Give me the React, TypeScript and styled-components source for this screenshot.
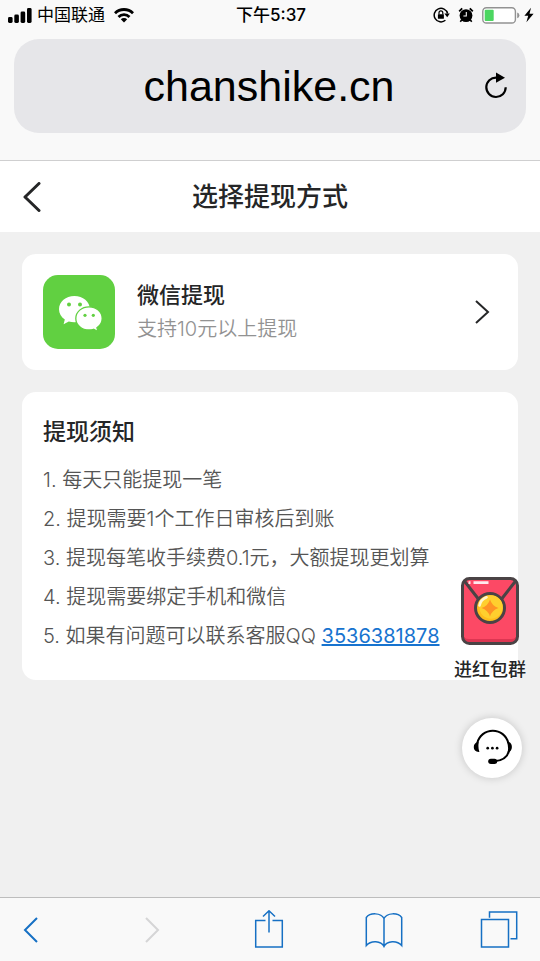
import React from "react";
import styled, { createGlobalStyle } from "styled-components";

const GlobalStyle = createGlobalStyle`
  *, *::before, *::after { box-sizing: border-box; }
  body {
    margin: 0;
    background: #f0f0f0;
    color: #252627;
    font-family: Inter, "Noto Sans CJK SC", sans-serif;
  }
  h1, h2, p, ol { margin: 0; padding: 0; }
  button { border: 0; padding: 0; background: none; font: inherit; color: inherit; cursor: pointer; }
  svg { display: block; flex: none; }
`;

const Screen = styled.div`
  display: flex;
  flex-direction: column;
  min-height: 100vh;
  position: relative;
`;

const BrowserTop = styled.header`
  background: #f9f9f9;
  border-bottom: 1px solid #cfcfd0;
  padding-bottom: 27px;
`;

const StatusBar = styled.div`
  display: grid;
  grid-template-columns: 1fr auto 1fr;
  align-items: center;
  height: 30px;
  padding: 0 6px 0 8px;
  color: #000;
  font-size: 17px;
  line-height: 28px;
`;

const StatusGroup = styled.div<{ $align?: "start" | "end" }>`
  display: flex;
  align-items: center;
  justify-content: ${(p) => p.$align ?? "start"};
  gap: ${(p) => (p.$align === "end" ? 8 : 5)}px;
`;

const Carrier = styled.span`
  margin-right: 4px;
`;

const Clock = styled.time`
  font-weight: 500;
`;

const BatteryGroup = styled.span`
  display: flex;
  align-items: center;
  gap: 4px;
`;

const AddressBar = styled.form`
  display: flex;
  align-items: center;
  height: 94px;
  margin: 9px 14px 0;
  padding: 0 8px 0 50px;
  border-radius: 25px;
  background: #e6e6e9;
`;

const AddressInput = styled.input`
  flex: 1;
  min-width: 0;
  border: 0;
  padding: 0;
  outline: 0;
  background: none;
  color: #000;
  text-align: center;
  font: 400 43px/60px "Liberation Sans", sans-serif;
`;

const PageHeader = styled.header`
  display: grid;
  grid-template-columns: 48px 1fr 48px;
  align-items: center;
  height: 71px;
  padding: 0 10px;
  background: #fff;
`;

const PageTitle = styled.h1`
  text-align: center;
  font-size: 26px;
  line-height: 40px;
  font-weight: 500;
`;

const IconButton = styled.button`
  display: flex;
  align-items: center;
  justify-content: center;
  width: 44px;
  height: 44px;
`;

const Content = styled.main`
  flex: 1;
  display: flex;
  flex-direction: column;
  gap: 22px;
  padding: 22px;
`;

const MethodCard = styled.button`
  display: flex;
  align-items: center;
  gap: 22px;
  padding: 21px 28px 21px 21px;
  border-radius: 14px;
  background: #fff;
  text-align: left;
`;

const MethodText = styled.span`
  flex: 1;
  display: flex;
  flex-direction: column;
  line-height: 34px;
`;

const MethodName = styled.span`
  font-size: 22px;
  font-weight: 500;
`;

const MethodHint = styled.span`
  font-size: 20px;
  font-weight: 350;
  color: #929292;
`;

const NoticeCard = styled.section`
  padding: 22px 21px 24px;
  border-radius: 14px;
  background: #fff;
`;

const NoticeTitle = styled.h2`
  margin-bottom: 10px;
  font-size: 23px;
  line-height: 37px;
  font-weight: 500;
`;

const NoticeList = styled.ol`
  list-style: none;
  font-size: 20px;
  font-weight: 350;
  line-height: 39px;
  color: #555;
`;

const ContactLink = styled.a`
  color: #1773cf;
  font-weight: 400;
`;

const FloatingActions = styled.aside`
  position: absolute;
  right: 14px;
  bottom: 183px;
  display: flex;
  flex-direction: column;
  align-items: center;
  gap: 35px;
`;

const GroupButton = styled.button`
  display: flex;
  flex-direction: column;
  align-items: center;
  gap: 12px;
  font-size: 18px;
  line-height: 26px;
  font-weight: 500;
  text-shadow: 0 0 2px #fff;
`;

const SupportButton = styled.button`
  width: 60px;
  height: 60px;
  margin-left: 4px;
  border-radius: 50%;
  background: #fff;
  box-shadow: 0 0 8px rgba(0, 0, 0, 0.18);
`;

const BrowserToolbar = styled.nav`
  display: grid;
  grid-template-columns: 121fr 117fr 115fr 115fr 63fr;
  align-items: center;
  height: 64px;
  padding-left: 9px;
  border-top: 1px solid #bdbdbd;
  background: #f9f9f9;
  color: #1670c4;
`;

const ToolButton = styled(IconButton)`
  &:disabled { color: #d5d5d6; }
`;

const SignalIcon = () => (
  <svg width="24" height="16" viewBox="0 0 24 16" aria-hidden="true">
    <rect x="0" y="10" width="4.6" height="6" rx="1.4" />
    <rect x="6.3" y="7.5" width="4.6" height="8.5" rx="1.4" />
    <rect x="12.6" y="4.5" width="4.6" height="11.5" rx="1.4" />
    <rect x="19" y="1" width="4.6" height="15" rx="1.4" />
  </svg>
);

const WifiIcon = () => (
  <svg width="20" height="15" viewBox="0 0 20 15" aria-hidden="true">
    <g fill="none" stroke="#000" strokeWidth="2.8">
      <path d="M1 5.2a12.8 12.8 0 0 1 18 0" />
      <path d="M4.5 8.9a7.8 7.8 0 0 1 11 0" />
    </g>
    <path d="M6.8 11.2a4.6 4.6 0 0 1 6.4 0L10 14.5z" />
  </svg>
);

const RotationLockIcon = () => (
  <svg width="17" height="16" viewBox="0 0 17 16" aria-hidden="true">
    <path d="M14.6 6.5a6.8 6.8 0 1 0-2.2 6.8" fill="none" stroke="#000" strokeWidth="1.5" />
    <path d="M11.4 6.6h5.4l-2.6 3.7z" />
    <rect x="4.9" y="7.2" width="6" height="4.6" rx=".6" />
    <path d="M6 7.4V5.8a1.9 1.9 0 0 1 3.8 0v1.6" fill="none" stroke="#000" strokeWidth="1.2" />
  </svg>
);

const AlarmIcon = () => (
  <svg width="16" height="16" viewBox="0 0 16 16" aria-hidden="true">
    <circle cx="8" cy="8.6" r="6.4" />
    <path d="M1.2 4.400 4.200 1.400M14.800 4.400l-3-3" stroke="#000" strokeWidth="1.900" />
    <path d="m3.800 12.800-1.500 2M12.200 12.800l1.500 2" stroke="#000" strokeWidth="1.600" />
    <path d="M8.300 5v4H5.400" fill="none" stroke="#f9f9f9" strokeWidth="1.100" />
  </svg>
);

const BatteryIcon = () => (
  <svg width="38" height="17" viewBox="0 0 38 17" aria-hidden="true">
    <rect x=".8" y=".8" width="32.6" height="15.2" rx="3.6" fill="#fff" stroke="#929292" strokeWidth="1.4" />
    <rect x="2.7" y="2.8" width="9" height="11.2" rx="1" fill="#4cd661" />
    <path d="M35.2 5.6q2.2.8 2.2 2.8t-2.2 2.8z" fill="#929292" />
  </svg>
);

const BoltIcon = () => (
  <svg width="10" height="16" viewBox="0 0 10 16" aria-hidden="true">
    <path d="M7 .8.4 8.7h3.8L2.4 15.2 9.6 6.8H5.5z" />
  </svg>
);

const ReloadIcon = () => (
  <svg width="24" height="28" viewBox="0 0 24 28" aria-hidden="true">
    <path d="M12.3 5.6A9.7 9.7 0 1 0 21.7 15.3" fill="none" stroke="#000" strokeWidth="2.2" />
    <path d="m12 .6 9 5.1-9 5z" />
  </svg>
);

const WechatIcon = () => (
  <svg width="72" height="74" viewBox="0 0 72 74" aria-hidden="true">
    <rect width="72" height="74" rx="15" fill="#61d041" />
    <path d="M31.4 21C22.8 21 16 26.8 16 34.3c0 4.2 2.2 7.8 5.8 10.2l-1.2 4.7 5.2-2.7c1.8.5 3.6.8 5.6.8 8.6 0 15.500-5.600 15.500-13S40 21 31.400 21z" fill="#fff" />
    <path d="M46 31.800c-7.200 0-13.200 5-13.200 11.600S38.800 55 46 55c1.600 0 3.200-.2 4.600-.7l4.400 2.300-1.100-3.900c3.200-2.100 5.300-5.400 5.300-9.300 0-6.600-6-11.600-13.200-11.600z" fill="#fff" stroke="#61d041" strokeWidth="1.300" />
    <g fill="#61d041">
      <circle cx="26" cy="29.600" r="2" />
      <circle cx="37" cy="29.600" r="2" />
      <circle cx="42" cy="40.300" r="1.600" />
      <circle cx="50.300" cy="40.300" r="1.600" />
    </g>
  </svg>
);

const RedPacketIcon = () => (
  <svg width="58" height="68" viewBox="0 0 58 68" aria-hidden="true">
    <rect x="1.500" y="1.500" width="55" height="65" rx="7" fill="#dd3652" />
    <path d="M2 8q0-6 6-6h42q6 0 6 6v48q0 6-6 6H8q-6 0-6-6z" fill="#fc4965" />
    <path d="m3 3.500 14 18M55 3.500 41 21.500" stroke="#4a4345" strokeWidth="3" />
    <rect x="1.500" y="1.500" width="55" height="65" rx="7" fill="none" stroke="#4a4345" strokeWidth="3" />
    <path d="M12.500 5.600h15M7.500 5.600h2" stroke="#ffe9ed" strokeWidth="2.600" />
    <circle cx="29" cy="31" r="14.500" fill="#ffbd1c" stroke="#4a4345" strokeWidth="3" />
    <circle cx="30" cy="30" r="11.700" fill="#ffcf2e" />
    <path d="M18.500 28.500q1.300-6 7-8.200" fill="none" stroke="#fff6ce" strokeWidth="2.600" strokeLinecap="round" />
    <path d="M29 22.500q2 6.500 8.500 8.500-6.500 2-8.500 8.500-2-6.500-8.500-8.500 6.500-2 8.500-8.500z" fill="#ff9324" />
  </svg>
);

const HeadsetIcon = () => (
  <svg width="60" height="60" viewBox="0 0 60 60" aria-hidden="true">
    <path d="M15.300 25a15.900 15.900 0 0 1 31 0M47 33c-1.600 6-7 9.800-15 10.300" fill="none" stroke="#000" strokeWidth="2" />
    <path d="M14.600 24.200h2.200q-1 4.800.6 9.800c-3.800.2-5.600-2-5.600-4.900 0-2.200 1-3.900 2.800-4.900zM45 24h2c2 .9 2.900 2.700 2.900 4.900 0 2.700-1.400 5-4.300 5.600q1.200-5.200-.6-10.500z" />
    <rect x="26.200" y="40.700" width="9" height="5.400" rx="2.700" />
    <circle cx="25.700" cy="30.200" r="1.350" />
    <circle cx="30.400" cy="30.200" r="1.350" />
    <circle cx="35.100" cy="30.200" r="1.350" />
  </svg>
);

type ChevronProps = { left?: boolean; width: number; height: number; stroke: number; round?: boolean };

const Chevron = ({ left, width: w, height: h, stroke: s, round }: ChevronProps) => (
  <svg width={w} height={h} viewBox={`0 0 ${w} ${h}`} fill="none" stroke="currentColor" strokeWidth={s} strokeLinecap={round ? "round" : "butt"} strokeLinejoin={round ? "round" : "miter"} aria-hidden="true">
    <path d={left ? `M${w - s} ${s / 2}L${s} ${h / 2}L${w - s} ${h - s / 2}` : `M${s} ${s / 2}L${w - s} ${h / 2}L${s} ${h - s / 2}`} />
  </svg>
);

const ShareIcon = () => (
  <svg width="30" height="40" viewBox="0 0 30 40" fill="none" stroke="currentColor" strokeWidth="1.500" aria-hidden="true">
    <path d="M11.500 10.500H1.700V37h26.600V10.500H18.500M15 22.500V.8M9 6.500 15 .8l6 5.700" />
  </svg>
);

const BookIcon = () => (
  <svg width="38" height="36" viewBox="0 0 38 36" fill="none" stroke="currentColor" strokeWidth="1.500" aria-hidden="true">
    <path d="M19 6.500C16 .5 5 .5 1.300 5.500v28C6 28 16 28.500 19 34.500 22 28.500 32 28 36.700 33.500v-28C33 .5 22 .5 19 6.500zM19 6.500v28" />
  </svg>
);

const TabsIcon = () => (
  <svg width="38" height="38" viewBox="0 0 38 38" fill="none" stroke="currentColor" strokeWidth="1.500" aria-hidden="true">
    <path d="M1.500 8.500h27V36h-27zM9.500 6.800V.9h27.200V27.700H30.500" />
  </svg>
);

const notices: React.ReactNode[] = [
  "每天只能提现一笔",
  "提现需要1个工作日审核后到账",
  "提现每笔收手续费0.1元，大额提现更划算",
  "提现需要绑定手机和微信",
  <>
    如果有问题可以联系客服QQ <ContactLink href="tel:3536381878">3536381878</ContactLink>
  </>,
];

export default function App() {
  return (
    <>
      <GlobalStyle />
      <Screen>
        <BrowserTop>
          <StatusBar>
            <StatusGroup>
              <SignalIcon />
              <Carrier>中国联通</Carrier>
              <WifiIcon />
            </StatusGroup>
            <Clock>下午5:37</Clock>
            <StatusGroup $align="end">
              <RotationLockIcon />
              <AlarmIcon />
              <BatteryGroup>
                <BatteryIcon />
                <BoltIcon />
              </BatteryGroup>
            </StatusGroup>
          </StatusBar>
          <AddressBar onSubmit={(e) => e.preventDefault()}>
            <AddressInput aria-label="网址" defaultValue="chanshike.cn" />
            <IconButton type="submit" aria-label="重新载入">
              <ReloadIcon />
            </IconButton>
          </AddressBar>
        </BrowserTop>

        <PageHeader>
          <IconButton type="button" aria-label="返回">
            <Chevron left width={20} height={30} stroke={3} round />
          </IconButton>
          <PageTitle>选择提现方式</PageTitle>
        </PageHeader>

        <Content>
          <MethodCard type="button">
            <WechatIcon />
            <MethodText>
              <MethodName>微信提现</MethodName>
              <MethodHint>支持10元以上提现</MethodHint>
            </MethodText>
            <Chevron width={16} height={24} stroke={2} />
          </MethodCard>

          <NoticeCard>
            <NoticeTitle>提现须知</NoticeTitle>
            <NoticeList>
              {notices.map((text, i) => (
                <li key={i}>
                  {i + 1}. {text}
                </li>
              ))}
            </NoticeList>
          </NoticeCard>
        </Content>

        <FloatingActions>
          <GroupButton type="button">
            <RedPacketIcon />
            进红包群
          </GroupButton>
          <SupportButton type="button" aria-label="联系客服">
            <HeadsetIcon />
          </SupportButton>
        </FloatingActions>

        <BrowserToolbar>
          <ToolButton type="button" aria-label="后退">
            <Chevron left width={16} height={26} stroke={2} />
          </ToolButton>
          <ToolButton type="button" aria-label="前进" disabled>
            <Chevron width={16} height={26} stroke={2} />
          </ToolButton>
          <ToolButton type="button" aria-label="分享">
            <ShareIcon />
          </ToolButton>
          <ToolButton type="button" aria-label="书签">
            <BookIcon />
          </ToolButton>
          <ToolButton type="button" aria-label="标签页">
            <TabsIcon />
          </ToolButton>
        </BrowserToolbar>
      </Screen>
    </>
  );
}
